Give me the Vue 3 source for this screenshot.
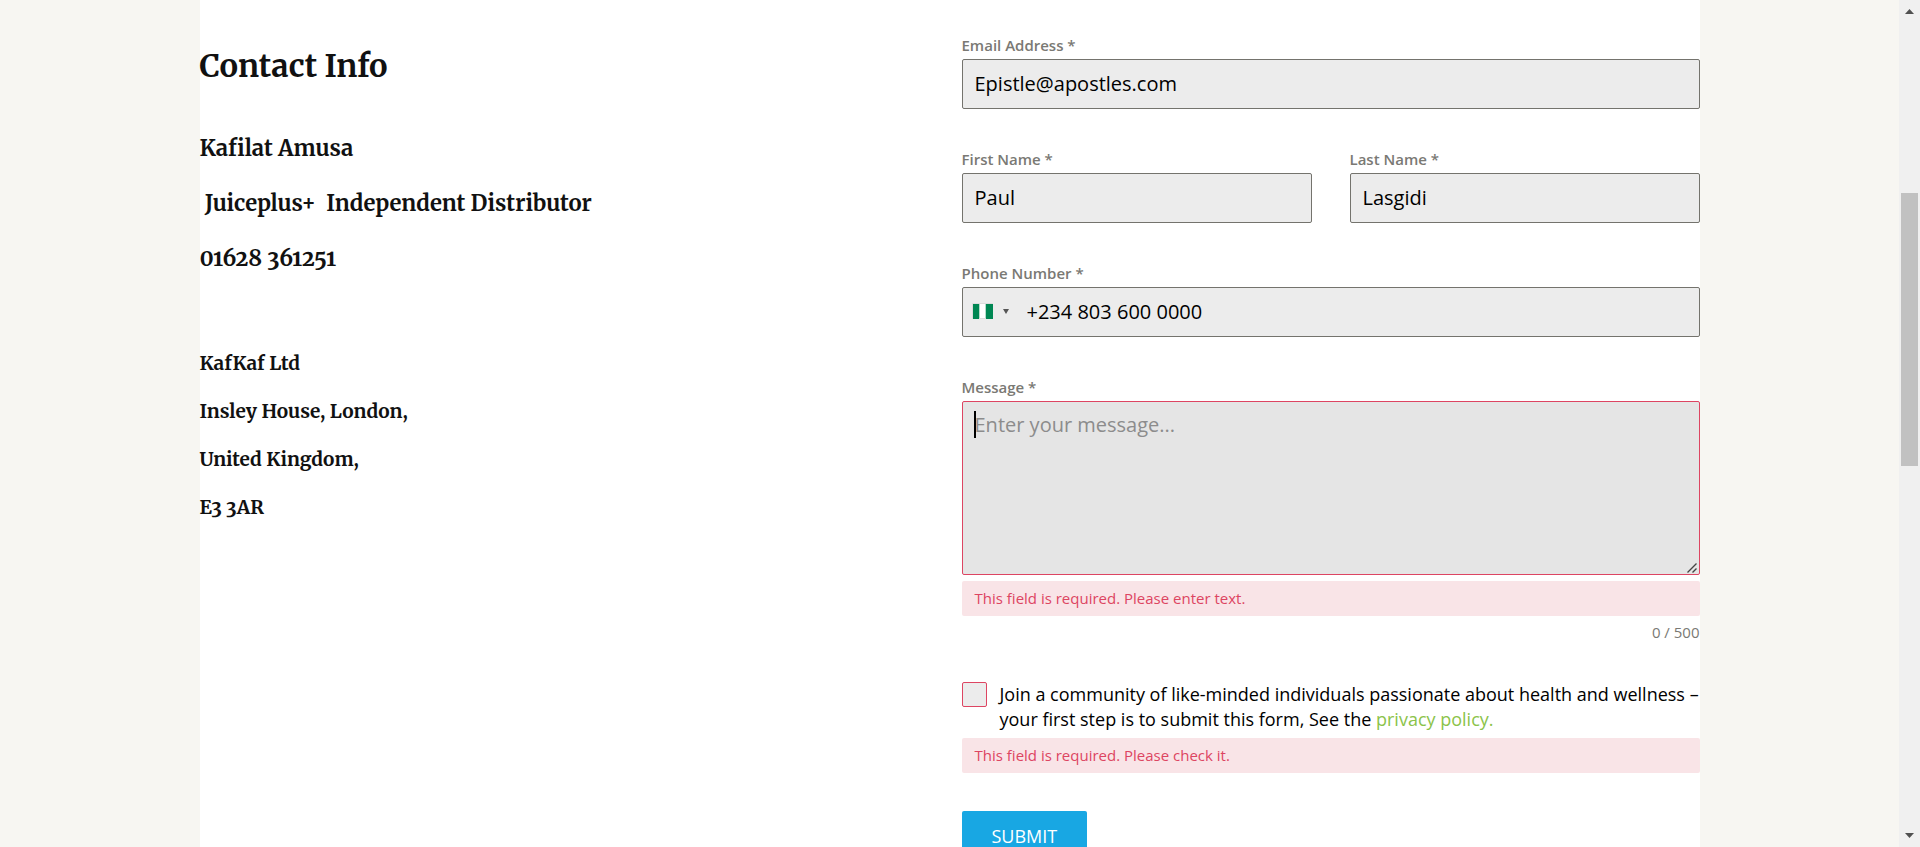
<script setup>
import { ref } from 'vue'

const email = ref('Epistle@apostles.com')
const firstName = ref('Paul')
const lastName = ref('Lasgidi')
const phone = ref('+234 803 600 0000')
const message = ref('')
const consent = ref(false)
const people = ['Kafilat Amusa', '\u00a0Juiceplus+\u00a0 Independent Distributor', '01628 361251']
const address = ['KafKaf Ltd', 'Insley House, London,', 'United Kingdom,', 'E3 3AR']
</script>

<template>
  <div class="page">
    <main class="content">
      <section class="contact">
        <h2>Contact Info</h2>
        <div class="people">
          <h3 v-for="line in people" :key="line">{{ line }}</h3>
        </div>
        <div class="address">
          <h4 v-for="line in address" :key="line">{{ line }}</h4>
        </div>
      </section>

      <form class="form" novalidate @submit.prevent>
        <div class="field">
          <label for="email">Email Address *</label>
          <input id="email" v-model="email" class="box" type="email" />
        </div>
        <div class="names">
          <div class="field">
            <label for="first">First Name *</label>
            <input id="first" v-model="firstName" class="box" type="text" />
          </div>
          <div class="field">
            <label for="last">Last Name *</label>
            <input id="last" v-model="lastName" class="box" type="text" />
          </div>
        </div>
        <div class="field">
          <label for="phone">Phone Number *</label>
          <div class="box phone">
            <button class="country" type="button" aria-label="Country: Nigeria">
              <svg width="21" height="16" viewBox="0 0 21 16">
                <rect width="21" height="16" rx="1" fill="#dcdcdc" />
                <rect x="1" y="1" width="19" height="14" fill="#fff" />
                <rect x="7" y="1" width="1" height="14" fill="#b5dccb" />
                <rect x="13" y="1" width="1" height="14" fill="#b5dccb" />
                <rect x="1" y="1" width="6" height="15" fill="#008753" />
                <rect x="14" y="1" width="7" height="15" fill="#008753" />
              </svg>
              <svg width="6" height="5" viewBox="0 0 6 5"><path d="M0 0H6L3 5Z" fill="#555" /></svg>
            </button>
            <input id="phone" v-model="phone" type="tel" />
          </div>
        </div>
        <div class="field">
          <label for="message">Message *</label>
          <div class="area">
            <textarea id="message" v-model="message" maxlength="500" placeholder="Enter your message..."></textarea>
            <span class="caret"></span>
            <svg class="grip" width="10" height="10" viewBox="0 0 10 10" fill="none" stroke="#444" stroke-width="1.4">
              <path d="M0.5 9.5L9.5 0.5M5.5 9.5L9.5 5.5" />
            </svg>
          </div>
          <p class="error">This field is required. Please enter text.</p>
          <p class="counter">{{ message.length }} / 500</p>
        </div>
        <div class="consent">
          <input id="consent" v-model="consent" type="checkbox" />
          <label for="consent">Join a community of like-minded individuals passionate about health and wellness – your first step is to submit this form, See the <a href="#privacy">privacy policy.</a></label>
        </div>
        <p class="error">This field is required. Please check it.</p>
        <button class="submit" type="submit">SUBMIT</button>
      </form>
    </main>

    <div class="scrollbar" aria-hidden="true">
      <svg class="arrow" viewBox="0 0 21 21"><path d="M6 14L10.500 9L15 14Z" fill="#505050" /></svg>
      <div class="before"></div>
      <div class="thumb"></div>
      <div class="after"></div>
      <svg class="arrow" viewBox="0 0 21 21"><path d="M6 7L10.500 12L15 7Z" fill="#505050" /></svg>
    </div>
  </div>
</template>

<style>
body {
  margin: 0;
}
</style>

<style scoped>
* {
  box-sizing: border-box;
}
.page {
  display: flex;
  height: 100vh;
  overflow: hidden;
  background: #f7f6f2;
  font-family: "Open Sans", "Noto Sans", sans-serif;
  color: #000;
}
.content {
  flex: 0 1 1500px;
  margin: 0 auto;
  display: grid;
  grid-template-columns: 1fr 1fr;
  gap: 24px;
  background: #fff;
}
.contact {
  padding-top: 45px;
  font-family: Merriweather, "Liberation Serif", serif;
  font-variant-numeric: oldstyle-nums;
  color: #111;
}
h2, h3, h4, p {
  margin: 0;
}
h2, h3, h4 {
  font-weight: 700;
}
h2 {
  font-size: 31px;
  line-height: 42px;
}
.people {
  display: grid;
  gap: 19px;
  margin-top: 43px;
}
h3 {
  font-size: 22px;
  line-height: 36px;
}
.address {
  display: grid;
  gap: 18px;
  margin-top: 72px;
}
h4 {
  font-size: 19px;
  line-height: 30px;
}
.form {
  padding-top: 35px;
}
.field {
  margin-bottom: 40px;
}
.field label {
  display: block;
  margin-bottom: 4px;
  font-size: 15px;
  font-weight: 600;
  line-height: 20px;
  color: #7a7974;
}
.names {
  display: grid;
  grid-template-columns: 1fr 1fr;
  gap: 38px;
}
.box {
  display: block;
  width: 100%;
  height: 50px;
  padding: 0 12px 2px;
  border: 1px solid #74736d;
  border-radius: 2px;
  background: #ececec;
  font: 20px "Open Sans", sans-serif;
  color: #000;
}
.phone {
  display: flex;
  align-items: center;
  padding: 0 12px 2px 9px;
}
.phone input {
  flex: 1;
  min-width: 0;
  padding: 0;
  border: 0;
  background: none;
  font: inherit;
}
.country {
  display: flex;
  align-items: center;
  gap: 10px;
  width: 55px;
  padding: 0;
  border: 0;
  background: none;
}
.area {
  position: relative;
}
textarea {
  display: block;
  width: 100%;
  height: 174px;
  padding: 9px 12px;
  border: 1px solid #dd4562;
  border-radius: 2px;
  background: #e5e5e5;
  font: 20px/28px "Open Sans", sans-serif;
  resize: none;
  outline: 0;
}
textarea::placeholder {
  color: #8c8c8c;
}
.caret {
  position: absolute;
  left: 12px;
  top: 10px;
  width: 2px;
  height: 27px;
  background: #000;
}
.grip {
  position: absolute;
  right: 3px;
  bottom: 2px;
}
.error {
  margin-top: 6px;
  padding: 0 13px;
  border-radius: 2px;
  background: #f9e4e7;
  font-size: 15px;
  line-height: 35px;
  color: #dd4562;
}
.counter {
  margin-top: 6px;
  font-size: 15px;
  line-height: 20px;
  text-align: right;
  color: #7a7974;
}
.consent {
  display: flex;
  gap: 13px;
}
.consent input {
  appearance: none;
  flex: none;
  width: 25px;
  height: 25px;
  margin: 0;
  border: 1px solid #dd4562;
  border-radius: 2px;
  background: #ececec;
}
.consent label {
  font-size: 18px;
  line-height: 25px;
}
.consent a {
  color: #8bc34a;
  text-decoration: none;
}
.submit {
  display: block;
  height: 50px;
  margin-top: 38px;
  padding: 0 30px;
  border: 0;
  border-radius: 2px;
  background: #18a7e3;
  font: 18px "Open Sans", sans-serif;
  color: #fff;
}
.scrollbar {
  display: flex;
  flex: none;
  flex-direction: column;
  width: 21px;
  background: #f0f0f0;
}
.arrow {
  width: 21px;
  height: 21px;
}
.before {
  flex: 172 0 0;
}
.thumb {
  flex: 273 0 0;
  margin: 0 2px;
  background: #c1c1c1;
}
.after {
  flex: 360 0 0;
}
</style>
